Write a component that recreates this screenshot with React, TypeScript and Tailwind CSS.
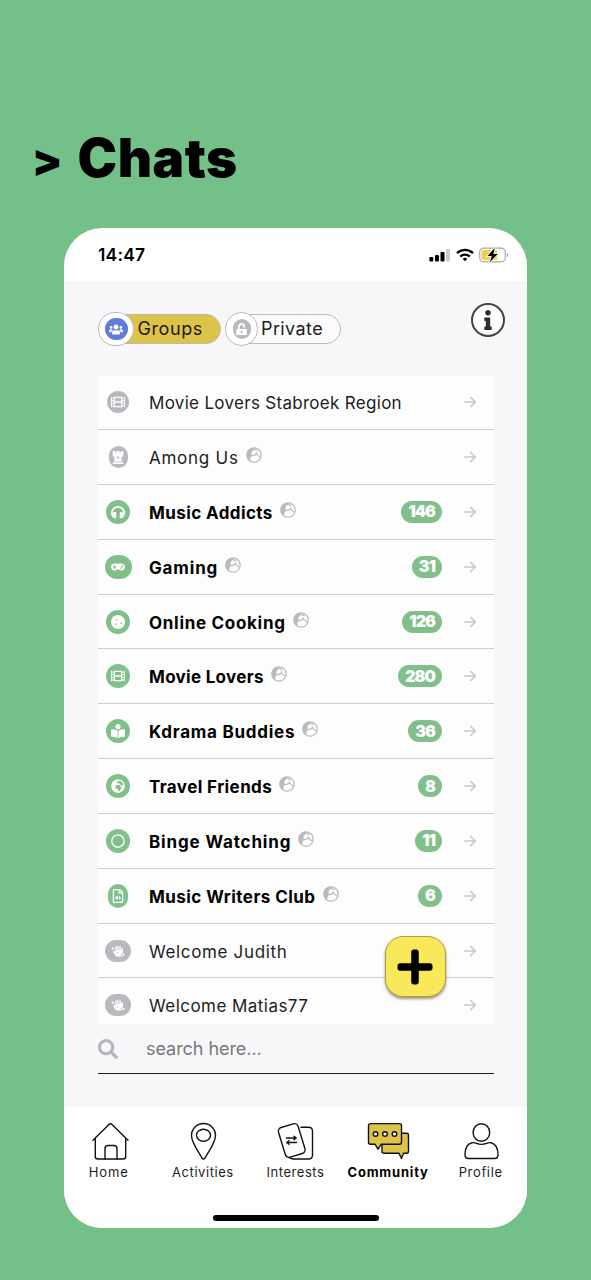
import type { ReactNode } from "react"
import {
  FaBookReader,
  FaChessRook,
  FaCookie,
  FaFilm,
  FaGamepad,
  FaGlobeAfrica,
  FaHandSparkles,
  FaHeadphones,
  FaInfo,
  FaPlus,
  FaRegCircle,
  FaRegFileAudio,
  FaSearch,
  FaUnlockAlt,
  FaUsers,
} from "react-icons/fa"
import type { IconType } from "react-icons"

type Chat = {
  Icon: IconType
  name: string
  tracking: string
  size: string
  isPublic?: boolean
  unread?: number
}

const chats: Chat[] = [
  { Icon: FaFilm, name: "Movie Lovers Stabroek Region", tracking: "tracking-[0.3px]", size: "w-[22px] h-[22px]" },
  { Icon: FaChessRook, name: "Among Us", tracking: "tracking-[0.75px]", size: "w-[19px] h-[22px]", isPublic: true },
  { Icon: FaHeadphones, name: "Music Addicts", tracking: "tracking-[0.4px]", size: "w-6 h-6", isPublic: true, unread: 146 },
  { Icon: FaGamepad, name: "Gaming", tracking: "tracking-[0.85px]", size: "w-[27px] h-6", isPublic: true, unread: 31 },
  { Icon: FaCookie, name: "Online Cooking", tracking: "tracking-[0.7px]", size: "w-6 h-6", isPublic: true, unread: 126 },
  { Icon: FaFilm, name: "Movie Lovers", tracking: "tracking-[0.3px]", size: "w-6 h-6", isPublic: true, unread: 280 },
  { Icon: FaBookReader, name: "Kdrama Buddies", tracking: "tracking-[0.75px]", size: "w-6 h-6", isPublic: true, unread: 36 },
  { Icon: FaGlobeAfrica, name: "Travel Friends", tracking: "tracking-[0.4px]", size: "w-6 h-6", isPublic: true, unread: 8 },
  { Icon: FaRegCircle, name: "Binge Watching", tracking: "tracking-[0.85px]", size: "w-6 h-6", isPublic: true, unread: 11 },
  { Icon: FaRegFileAudio, name: "Music Writers Club", tracking: "tracking-[0.45px]", size: "w-5 h-6", isPublic: true, unread: 6 },
  { Icon: FaHandSparkles, name: "Welcome Judith", tracking: "tracking-[0.65px]", size: "w-[26px] h-[22px]" },
  { Icon: FaHandSparkles, name: "Welcome Matias77", tracking: "tracking-[0.45px]", size: "w-[26px] h-[22px]" },
]

function PublicIcon() {
  return (
    <svg viewBox="0 0 16 16" className="mb-[6px] ml-[7px] h-4 w-4 shrink-0">
      <circle cx="8" cy="8" r="7.2" fill="none" stroke="#b9b9c0" strokeWidth="1.3" />
      <path d="M8 .8C4 .8.8 4 .8 8c0 3 1.400 5 3.700 6.300-.3-1.500-.4-2.800.3-3.900L6 8.600C5.100 7.200 5.300 5.400 6.200 4.200L8.800 2Z" fill="#b9b9c0" />
      <path d="M8.300 2.600l3.200 1M5.800 8.600c2 .2 3.400-1 4.700-1.500l3.400 3M10.700 7.100l-.6-1.800" fill="none" stroke="#b9b9c0" strokeWidth="1.200" />
    </svg>
  )
}

function ChatRow({ chat }: { chat: Chat }) {
  const { Icon, name, tracking, size, isPublic, unread } = chat
  return (
    <li className="flex h-[54.850px] shrink-0 items-center border-b-[1.300px] border-[#cfcfd1] pr-[17px] first:-mt-[0.800px]">
      <div className="flex w-10 justify-center">
        <span
          className={`flex items-center justify-center rounded-full text-white ${size} ${unread ? "bg-[#81bf8b]" : "bg-[#b8b8bf]"}`}
        >
          <Icon className="h-[14px] w-auto" />
        </span>
      </div>
      <div className="flex flex-1 items-center pt-[2px] pl-[11px]">
        <span className={`text-[17px] leading-6 whitespace-nowrap ${tracking} ${unread ? "font-bold text-black" : "text-[#1c1c1e]"}`}>
          {name}
        </span>
        {isPublic && <PublicIcon />}
      </div>
      {unread && (
        <span className="mr-[21px] flex h-[22px] items-center rounded-full bg-[#81bf8b] px-[7px] pb-px text-base leading-none font-black tracking-[-0.9px] text-white">
          {unread}
        </span>
      )}
      <svg viewBox="0 0 14 12" className="h-3 w-[14px]" fill="none" stroke="#c9c9cb" strokeWidth="1.700">
        <path d="M.8 6h11.500M7.300 1l5 5-5 5" />
      </svg>
    </li>
  )
}

function StatusBar() {
  return (
    <div className="flex h-[53px] items-center justify-between pr-[18px] pl-[34px]">
      <span className="pt-px text-[17.500px] font-semibold tracking-[0.200px]">14:47</span>
      <div className="flex items-center gap-[5px]">
        <svg viewBox="0 0 22 14" className="h-[14px] w-[22px]">
          <rect x="0.300" y="9" width="4" height="4.500" rx="1" />
          <rect x="6" y="7" width="4" height="6.500" rx="1" />
          <rect x="11.500" y="4" width="4" height="9.500" rx="1" />
          <rect x="17" y="1" width="4" height="12.500" rx="1" fill="#cccccc" />
        </svg>
        <svg viewBox="0 0 18 14" className="h-[14px] w-[18px]" fill="none" stroke="#000" strokeWidth="2.300">
          <path d="M1 5.200a11.500 11.500 0 0 1 16 0M4.200 8.500a7 7 0 0 1 9.600 0" />
          <path d="M9 13.200 6.700 10.900a3.300 3.300 0 0 1 4.600 0Z" fill="#000" stroke="none" />
        </svg>
        <svg viewBox="0 0 30 16" className="h-4 w-[30px]">
          <rect x="0.700" y="1.200" width="25.600" height="13.600" rx="4" fill="#fff" stroke="#a9a9a9" strokeWidth="1.200" />
          <rect x="2.500" y="3" width="16" height="10" rx="2" fill="#f3cb4e" />
          <path d="M27.800 5.800c1.800.6 1.800 3.800 0 4.400Z" fill="#a9a9a9" />
          <path d="M15.800.8 8.500 9h4.200l-1.800 6.200L18.700 7h-4.300Z" stroke="#fff" strokeWidth="1.600" paintOrder="stroke" />
        </svg>
      </div>
    </div>
  )
}

function Filters() {
  return (
    <div className="flex items-start justify-between pr-[22px] pl-[34px]">
      <div className="flex gap-1 pt-[9px]">
        <button className="flex h-[34px] items-center">
          <span className="z-10 flex h-[34px] w-[36px] items-center justify-center rounded-full border border-[#b9b9c2] bg-white">
            <span className="flex h-[22px] w-[23px] items-center justify-center rounded-full bg-[#5e7cd8] text-white">
              <FaUsers className="h-[13px] w-[14px]" />
            </span>
          </span>
          <span className="-ml-5 flex h-[30px] w-[107px] items-center rounded-r-full border border-[#b9b9b2] bg-[#dec34a] pl-[22.500px] text-lg tracking-[0.600px] text-[#1c1a10]">
            Groups
          </span>
        </button>
        <button className="flex h-[34px] items-center">
          <span className="z-10 flex h-[34px] w-[33px] items-center justify-center rounded-full border border-[#b9b9c2] bg-white">
            <span className="flex h-5 w-[18px] items-center justify-center rounded-full bg-[#b8b8bf] text-white">
              <FaUnlockAlt className="h-3 w-[11px]" />
            </span>
          </span>
          <span className="-ml-4 flex h-[30px] w-[99px] items-center rounded-r-full border border-[#b9b9c2] bg-[#fbfbfc] pl-[18px] text-lg tracking-[0.400px] text-[#1c1c1e]">
            Private
          </span>
        </button>
      </div>
      <button className="flex h-[34px] w-[34px] items-center justify-center rounded-full border-2 border-[#444] bg-white text-[#2c2c2c]">
        <FaInfo className="h-5 w-5" />
      </button>
    </div>
  )
}

function TabIcon({ children }: { children: ReactNode }) {
  return (
    <svg
      viewBox="0 0 44 40"
      className="h-10 w-11"
      fill="none"
      stroke="#111"
      strokeWidth="1.400"
      strokeLinecap="round"
      strokeLinejoin="round"
    >
      {children}
    </svg>
  )
}

const tabs = [
  {
    label: "Home",
    style: "tracking-[0.900px] -ml-[3px]",
    icon: (
      <>
        <path d="M5 19.200 20.700 3.700q1.800-1.700 3.600 0L40 19.200" />
        <path d="M7.300 17.500v18q0 2.500 2.500 2.500h25.400q2.500 0 2.500-2.500v-18" />
        <path d="M17 38V27.500q0-3 3-3h6q3 0 3 3V38" />
      </>
    ),
  },
  {
    label: "Activities",
    style: "tracking-[0.550px]",
    icon: (
      <>
        <path d="M21 37C17 30 10.500 21.500 10.500 14.500a12 12 0 0 1 24 0C34.500 21.500 28 30 24 37q-1.500 2-3 0Z" />
        <ellipse cx="22.500" cy="14.200" rx="7" ry="6" />
      </>
    ),
  },
  {
    label: "Interests",
    style: "tracking-[0.550px]",
    icon: (
      <>
        <path d="M28 6.200h7.500q4 0 4 4V34q0 4-4 4H20l-4-1.500" />
        <rect x="8.500" y="4" width="20.500" height="31" rx="4" transform="rotate(-17 18.750 19.500)" fill="#fff" />
        <path d="M13.500 17h9.500M21 15.200l2.200 1.800-2.200 1.800M23.500 21.500H14M16 19.700l-2.200 1.800 2.200 1.800" />
      </>
    ),
  },
  {
    label: "Community",
    style: "font-bold text-black tracking-[0.800px] whitespace-nowrap",
    icon: (
      <>
        <path d="M18 12.300h22.500q2 0 2 2v15.900q0 2-2 2h-3L35.500 37.500 33 32.200H18q-2 0-2-2V14.300q0-2 2-2Z" fill="#dec34a" />
        <path d="M4.500 2.600h29q2 0 2 2v16.600q0 2-2 2H15.300L12 28.200 9 23.200H4.500q-2 0-2-2V4.600q0-2 2-2Z" fill="#dec34a" />
        <circle cx="9.500" cy="13" r="2.300" fill="#fff" />
        <circle cx="19" cy="13" r="2.300" fill="#fff" />
        <circle cx="28.500" cy="13" r="2.300" fill="#fff" />
      </>
    ),
  },
  {
    label: "Profile",
    style: "tracking-[0.650px]",
    icon: (
      <>
        <ellipse cx="22.400" cy="11.500" rx="8.300" ry="8.800" />
        <path d="M13 21.700q2.500-.3 4.500.7 5 2 10 0 2-1 4.500-.7 7 1.500 7 12.300 0 3.500-3.500 3.500h-26Q6 37.500 6 34q0-10.800 7-12.300Z" />
      </>
    ),
  },
]

function TabBar() {
  return (
    <nav className="flex h-[121px] flex-col items-center justify-between bg-white pt-[14px] pb-[7px]">
      <div className="flex w-full">
        {tabs.map(({ label, style, icon }) => (
          <div key={label} className="flex flex-1 flex-col items-center">
            <TabIcon>{icon}</TabIcon>
            <span className={`mt-px text-[13px] leading-5 text-[#1c1c1e] ${style}`}>{label}</span>
          </div>
        ))}
      </div>
      <div className="h-[6px] w-[166px] rounded-full bg-black" />
    </nav>
  )
}

export default function App() {
  return (
    <main className="h-[1280px] w-[591px] overflow-hidden bg-[#73c188] pt-[128px] font-['Inter',sans-serif] text-black">
      <h1 className="flex h-[60px] items-center gap-[15px] pl-[32px] text-[53px] leading-none font-black">
        <span className="pt-[3px] text-[44px]">&gt;</span>
        <span className="tracking-[0.500px]">Chats</span>
      </h1>

      <div className="mt-10 ml-16 flex h-[1000px] w-[463px] flex-col overflow-hidden rounded-[38px] bg-white">
        <StatusBar />
        <section className="flex flex-1 flex-col bg-[#f7f7fa] pt-[22px]">
          <Filters />

          <div className="relative mt-[30px] ml-[34px] w-[396px]">
            <ul className="flex h-[648px] flex-col overflow-hidden bg-[#fdfdfd]">
              {chats.map((chat) => (
                <ChatRow key={chat.name} chat={chat} />
              ))}
            </ul>
            <button className="absolute top-[560px] left-[286.500px] flex h-[61px] w-[61px] items-center justify-center rounded-[18px] border border-[#aaa043] bg-[#f8e85a] shadow-[0_2px_3px_rgba(60,50,0,0.5)]">
              <FaPlus className="h-10 w-10" />
            </button>
          </div>

          <label className="ml-[34px] flex h-[50px] w-[396px] items-center border-b-[1.500px] border-[#1c1c22]">
            <FaSearch className="h-5 w-5 text-[#b5b5bb]" />
            <span className="pl-7 text-[18px] tracking-[-0.050px] text-[#77777b]">search here...</span>
          </label>
        </section>
        <TabBar />
      </div>
    </main>
  )
}
